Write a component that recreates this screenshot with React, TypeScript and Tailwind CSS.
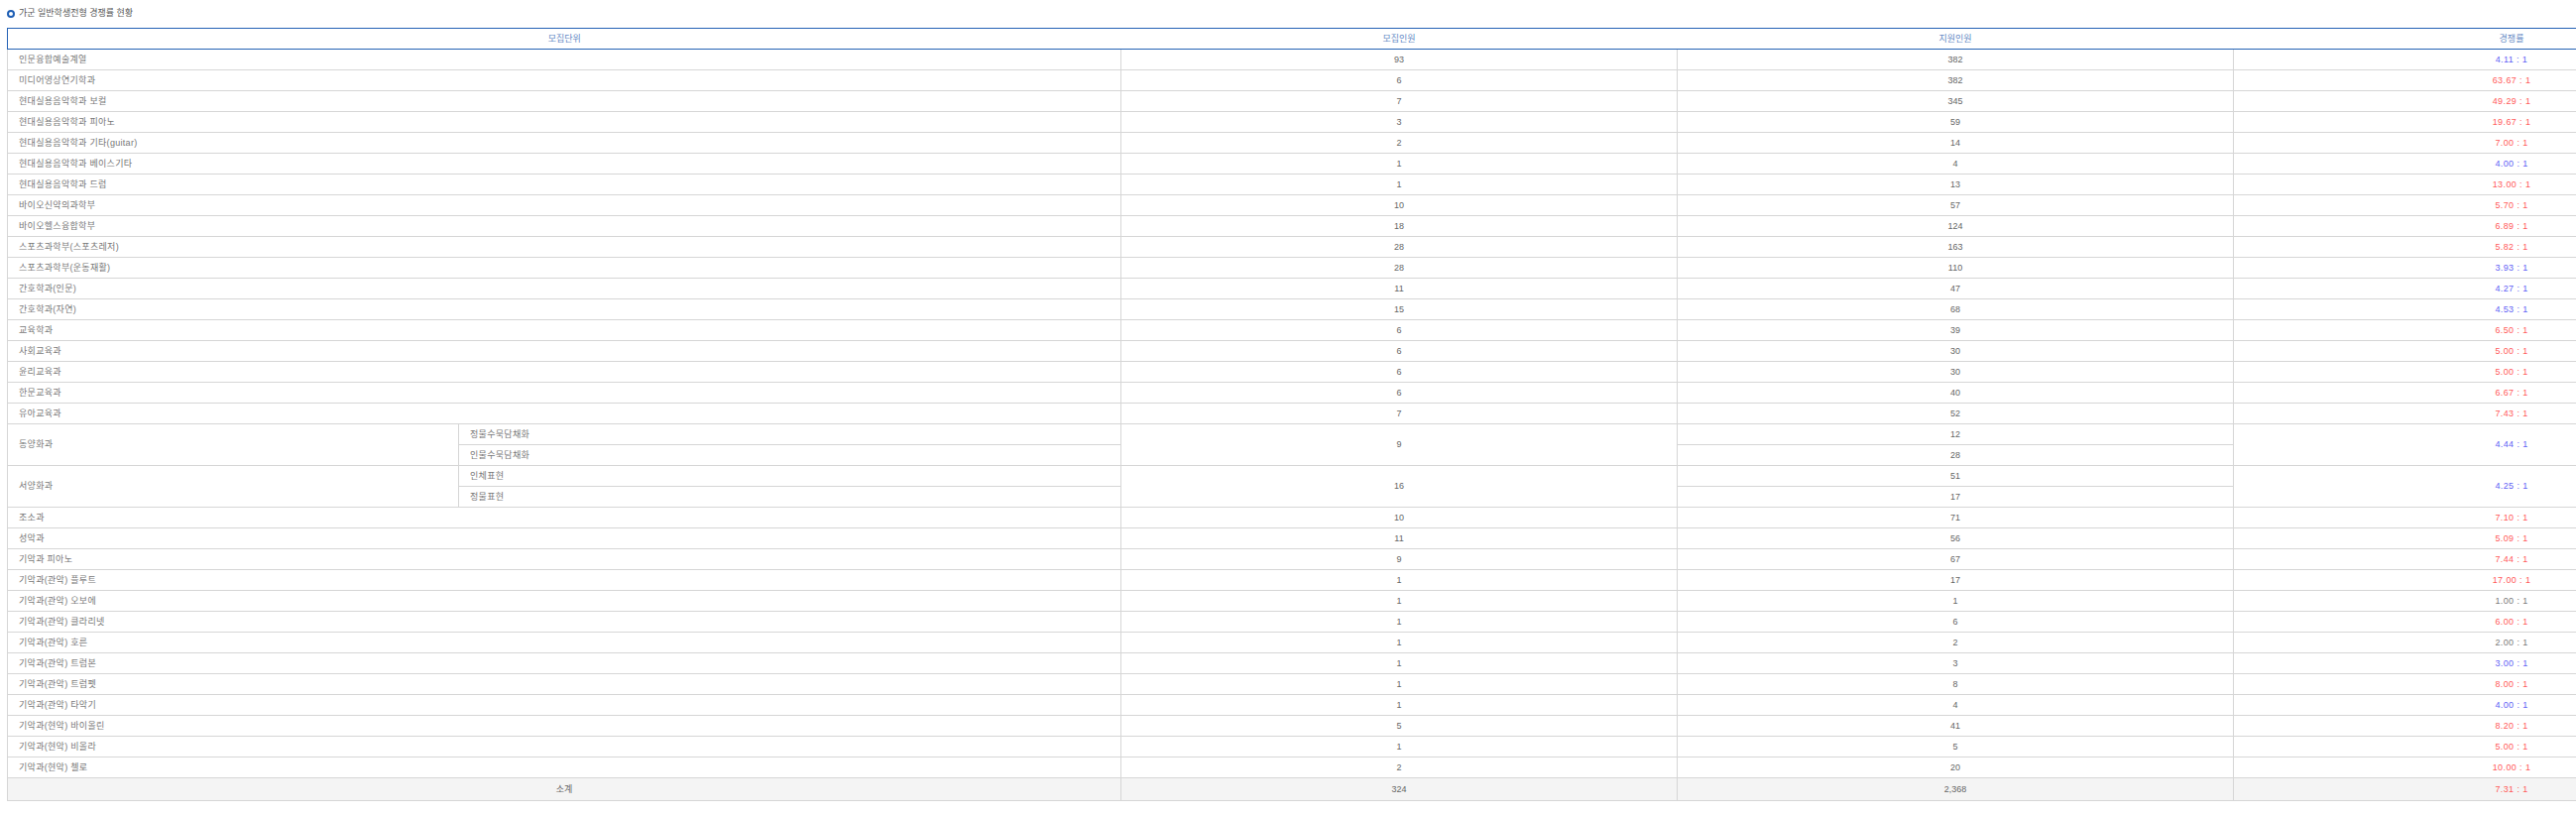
import React from 'react';

type Row = {
  name: string;
  quota: number;
  applied: number;
  ratio: string;
};

type SplitRow = {
  name: string;
  subs: { label: string; applied: number }[];
  quota: number;
  ratio: string;
};

const rowsA: Row[] = [
  { name: '인문융합예술계열', quota: 93, applied: 382, ratio: '4.11' },
  { name: '미디어영상연기학과', quota: 6, applied: 382, ratio: '63.67' },
  { name: '현대실용음악학과 보컬', quota: 7, applied: 345, ratio: '49.29' },
  { name: '현대실용음악학과 피아노', quota: 3, applied: 59, ratio: '19.67' },
  { name: '현대실용음악학과 기타(guitar)', quota: 2, applied: 14, ratio: '7.00' },
  { name: '현대실용음악학과 베이스기타', quota: 1, applied: 4, ratio: '4.00' },
  { name: '현대실용음악학과 드럼', quota: 1, applied: 13, ratio: '13.00' },
  { name: '바이오신약의과학부', quota: 10, applied: 57, ratio: '5.70' },
  { name: '바이오헬스융합학부', quota: 18, applied: 124, ratio: '6.89' },
  { name: '스포츠과학부(스포츠레저)', quota: 28, applied: 163, ratio: '5.82' },
  { name: '스포츠과학부(운동재활)', quota: 28, applied: 110, ratio: '3.93' },
  { name: '간호학과(인문)', quota: 11, applied: 47, ratio: '4.27' },
  { name: '간호학과(자연)', quota: 15, applied: 68, ratio: '4.53' },
  { name: '교육학과', quota: 6, applied: 39, ratio: '6.50' },
  { name: '사회교육과', quota: 6, applied: 30, ratio: '5.00' },
  { name: '윤리교육과', quota: 6, applied: 30, ratio: '5.00' },
  { name: '한문교육과', quota: 6, applied: 40, ratio: '6.67' },
  { name: '유아교육과', quota: 7, applied: 52, ratio: '7.43' },
];

const splitRows: SplitRow[] = [
  {
    name: '동양화과',
    subs: [
      { label: '정물수묵담채화', applied: 12 },
      { label: '인물수묵담채화', applied: 28 },
    ],
    quota: 9,
    ratio: '4.44',
  },
  {
    name: '서양화과',
    subs: [
      { label: '인체표현', applied: 51 },
      { label: '정물표현', applied: 17 },
    ],
    quota: 16,
    ratio: '4.25',
  },
];

const rowsB: Row[] = [
  { name: '조소과', quota: 10, applied: 71, ratio: '7.10' },
  { name: '성악과', quota: 11, applied: 56, ratio: '5.09' },
  { name: '기악과 피아노', quota: 9, applied: 67, ratio: '7.44' },
  { name: '기악과(관악) 플루트', quota: 1, applied: 17, ratio: '17.00' },
  { name: '기악과(관악) 오보에', quota: 1, applied: 1, ratio: '1.00' },
  { name: '기악과(관악) 클라리넷', quota: 1, applied: 6, ratio: '6.00' },
  { name: '기악과(관악) 호른', quota: 1, applied: 2, ratio: '2.00' },
  { name: '기악과(관악) 트럼본', quota: 1, applied: 3, ratio: '3.00' },
  { name: '기악과(관악) 트럼펫', quota: 1, applied: 8, ratio: '8.00' },
  { name: '기악과(관악) 타악기', quota: 1, applied: 4, ratio: '4.00' },
  { name: '기악과(현악) 바이올린', quota: 5, applied: 41, ratio: '8.20' },
  { name: '기악과(현악) 비올라', quota: 1, applied: 5, ratio: '5.00' },
  { name: '기악과(현악) 첼로', quota: 2, applied: 20, ratio: '10.00' },
];

// 5:1 이상 빨강, 3:1 이상 파랑, 나머지 회색
function ratioColor(r: string) {
  const v = parseFloat(r);
  if (v >= 5) return 'text-[#ff5a5a]';
  if (v >= 3) return 'text-[#6262f5]';
  return 'text-[#7a7a7a]';
}

const cell = 'h-[21px] border-b border-r border-[#d6d6d6] p-0 align-middle';
const nameCell = `${cell} border-l text-left pl-[11px] text-[#777] tracking-[0.3px]`;
const numCell = `${cell} text-center text-[#666]`;
const headCell = 'h-[21px] border-y border-[#2462b5] p-0 text-center font-normal text-[#6489c4]';

function Ratio({ value }: { value: string }) {
  return <span className={`tracking-[0.4px] ${ratioColor(value)}`}>{value} : 1</span>;
}

export default function App() {
  return (
    <div
      className="w-full overflow-hidden bg-white text-[9px] leading-none"
      style={{ fontFamily: '"Liberation Sans", "Noto Sans CJK KR", sans-serif' }}
    >
      <div className="w-[2813px] pl-[7px]">
        {/* 제목 */}
        <div className="flex h-[28px] items-center gap-[4px] pb-[1px]">
          <span className="inline-block h-[8px] w-[8px] rounded-full border-[2px] border-[#1f5fb4]" />
          <span className="text-[9px] text-[#555]">가군 일반학생전형 경쟁률 현황</span>
        </div>

        <table className="w-[2806px] table-fixed border-collapse">
          <colgroup>
            <col className="w-[455px]" />
            <col className="w-[668px]" />
            <col className="w-[561px]" />
            <col className="w-[561px]" />
            <col className="w-[561px]" />
          </colgroup>
          <thead>
            <tr>
              <th colSpan={2} className={`${headCell} border-l`}>
                모집단위
              </th>
              <th className={headCell}>모집인원</th>
              <th className={headCell}>지원인원</th>
              <th className={headCell}>경쟁률</th>
            </tr>
          </thead>
          <tbody>
            {rowsA.map((r) => (
              <tr key={r.name}>
                <td colSpan={2} className={nameCell}>{r.name}</td>
                <td className={numCell}>{r.quota}</td>
                <td className={numCell}>{r.applied}</td>
                <td className={numCell}><Ratio value={r.ratio} /></td>
              </tr>
            ))}

            {splitRows.map((s) =>
              s.subs.map((sub, i) => (
                <tr key={s.name + sub.label}>
                  {i === 0 && (
                    <td rowSpan={2} className={nameCell}>{s.name}</td>
                  )}
                  <td className={nameCell}>{sub.label}</td>
                  {i === 0 && (
                    <td rowSpan={2} className={numCell}>{s.quota}</td>
                  )}
                  <td className={numCell}>{sub.applied}</td>
                  {i === 0 && (
                    <td rowSpan={2} className={numCell}><Ratio value={s.ratio} /></td>
                  )}
                </tr>
              ))
            )}

            {rowsB.map((r) => (
              <tr key={r.name}>
                <td colSpan={2} className={nameCell}>{r.name}</td>
                <td className={numCell}>{r.quota}</td>
                <td className={numCell}>{r.applied}</td>
                <td className={numCell}><Ratio value={r.ratio} /></td>
              </tr>
            ))}

            {/* 소계 */}
            <tr className="bg-[#f4f4f4]">
              <td colSpan={2} className="h-[23px] border-b border-l border-r border-[#d6d6d6] p-0 text-center text-[#666]">
                소계
              </td>
              <td className="h-[23px] border-b border-r border-[#d6d6d6] p-0 text-center text-[#666]">324</td>
              <td className="h-[23px] border-b border-r border-[#d6d6d6] p-0 text-center text-[#666]">2,368</td>
              <td className="h-[23px] border-b border-r border-[#d6d6d6] p-0 text-center">
                <Ratio value="7.31" />
              </td>
            </tr>
          </tbody>
        </table>
      </div>
    </div>
  );
}
